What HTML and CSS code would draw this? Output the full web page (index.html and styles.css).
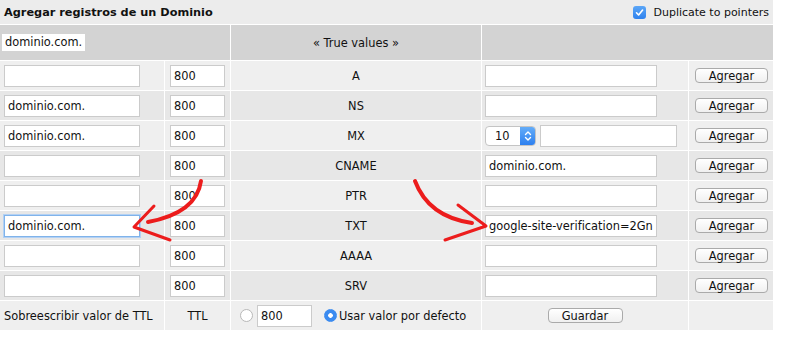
FILE: index.html
```html
<!DOCTYPE html>
<html lang="es">

<head>
    <meta charset="UTF-8">
    <title>Agregar registros de un Dominio</title>
    <link rel="stylesheet" href="styles.css">
</head>

<body>
    <div class="wrap">
        <table class="records">
            <colgroup>
                <col class="c-name">
                <col class="c-ttl">
                <col class="c-type">
                <col class="c-value">
                <col class="c-action">
            </colgroup>
            <tr class="row-title">
                <td colspan="5">
                    <div class="title-bar">
                        <span class="title">Agregar registros de un Dominio</span>
                        <label class="dup">
                            <span class="checkbox"><svg width="9" height="9" viewBox="0 0 9 9"><path d="M1.5 4.8 L3.6 7 L7.6 2" fill="none" stroke="#fff" stroke-width="1.6" stroke-linecap="round" stroke-linejoin="round"/></svg></span>
                            Duplicate to pointers
                        </label>
                    </div>
                </td>
            </tr>
            <tr class="row-head">
                <td colspan="2"><span class="domain-tag">dominio.com.</span></td>
                <td class="center">« True values »</td>
                <td colspan="2"></td>
            </tr>
            <tr class="odd">
                <td class="c1"><input class="txt name" type="text"></td>
                <td class="c2"><input class="txt ttl" type="text" value="800"></td>
                <td class="center">A</td>
                <td class="c4"><input class="txt value" type="text"></td>
                <td class="c5"><button class="btn">Agregar</button></td>
            </tr>
            <tr class="even">
                <td class="c1"><input class="txt name" type="text" value="dominio.com."></td>
                <td class="c2"><input class="txt ttl" type="text" value="800"></td>
                <td class="center">NS</td>
                <td class="c4"><input class="txt value" type="text"></td>
                <td class="c5"><button class="btn">Agregar</button></td>
            </tr>
            <tr class="odd">
                <td class="c1"><input class="txt name" type="text" value="dominio.com."></td>
                <td class="c2"><input class="txt ttl" type="text" value="800"></td>
                <td class="center">MX</td>
                <td class="c4">
                    <div class="mx">
                        <div class="select">
                            <span class="select-val">10</span>
                            <span class="select-arrows"><svg width="8" height="12" viewBox="0 0 8 12"><path d="M1.5 4.5 L4 2 L6.5 4.5 M1.5 7.5 L4 10 L6.5 7.5" fill="none" stroke="#fff" stroke-width="1.4" stroke-linecap="round" stroke-linejoin="round"/></svg></span>
                        </div>
                        <input class="txt prio" type="text">
                    </div>
                </td>
                <td class="c5"><button class="btn">Agregar</button></td>
            </tr>
            <tr class="even">
                <td class="c1"><input class="txt name" type="text"></td>
                <td class="c2"><input class="txt ttl" type="text" value="800"></td>
                <td class="center">CNAME</td>
                <td class="c4"><input class="txt value" type="text" value="dominio.com."></td>
                <td class="c5"><button class="btn">Agregar</button></td>
            </tr>
            <tr class="odd">
                <td class="c1"><input class="txt name" type="text"></td>
                <td class="c2"><input class="txt ttl" type="text" value="800"></td>
                <td class="center">PTR</td>
                <td class="c4"><input class="txt value" type="text"></td>
                <td class="c5"><button class="btn">Agregar</button></td>
            </tr>
            <tr class="even">
                <td class="c1"><input class="txt name focus" type="text" value="dominio.com."></td>
                <td class="c2"><input class="txt ttl" type="text" value="800"></td>
                <td class="center">TXT</td>
                <td class="c4"><input class="txt value" type="text" value="google-site-verification=2Gn"></td>
                <td class="c5"><button class="btn">Agregar</button></td>
            </tr>
            <tr class="odd">
                <td class="c1"><input class="txt name" type="text"></td>
                <td class="c2"><input class="txt ttl" type="text" value="800"></td>
                <td class="center">AAAA</td>
                <td class="c4"><input class="txt value" type="text"></td>
                <td class="c5"><button class="btn">Agregar</button></td>
            </tr>
            <tr class="even">
                <td class="c1"><input class="txt name" type="text"></td>
                <td class="c2"><input class="txt ttl" type="text" value="800"></td>
                <td class="center">SRV</td>
                <td class="c4"><input class="txt value" type="text"></td>
                <td class="c5"><button class="btn">Agregar</button></td>
            </tr>
            <tr class="odd">
                <td class="c1 label">Sobreescribir valor de TTL</td>
                <td class="center">TTL</td>
                <td class="c3">
                    <div class="ttl-opts">
                        <input class="radio" type="radio" name="ttl">
                        <input class="txt ttl" type="text" value="800">
                        <label class="use-default"><input class="radio" type="radio" name="ttl" checked>Usar valor por defecto</label>
                    </div>
                </td>
                <td class="center"><button class="btn save">Guardar</button></td>
                <td></td>
            </tr>
        </table>

        <!-- hand drawn arrows -->
        <svg class="arrows" width="787" height="340" viewBox="0 0 787 340">
            <g fill="none" stroke="#ec1c1c" stroke-linecap="round" stroke-linejoin="round">
                <path d="M201 181 C198 202 180 216 148 222" stroke-width="4"/>
                <path d="M154 206 L134 227 L170 240" stroke-width="3"/>
                <path d="M415 181 C424 205 444 219 472 223" stroke-width="4"/>
                <path d="M458 205 L486 226 L445 240" stroke-width="3"/>
            </g>
        </svg>
    </div>
</body>

</html>
```

FILE: styles.css
```css
/* General */
body {
    margin: 0;
    padding: 0;
    background-color: #fff;
    font-family: 'DejaVu Sans', Verdana, sans-serif;
    font-size: 11.4px;
    color: #111;
}

.wrap {
    position: relative;
    width: 787px;
    height: 340px;
}

/* Table */
.records {
    border-collapse: separate;
    border-spacing: 0;
    table-layout: fixed;
    width: 774px;
}

.c-name { width: 165px; }
.c-ttl { width: 66px; }
.c-type { width: 251px; }
.c-value { width: 207px; }
.c-action { width: 85px; }

.records td {
    border-right: 1px solid #fff;
    border-bottom: 1px solid #fff;
    padding: 0;
    vertical-align: middle;
    white-space: nowrap;
}

.records tr { height: 30px; }
.records .odd td { background-color: #efefef; }
.records .even td { background-color: #e7e7e7; }

.records .center { text-align: center; }
.records .c1 { padding-left: 4px; }
.records .c2 { padding-left: 5px; }
.records .c3 { padding-left: 9px; }
.records .c4 { padding-left: 3px; }
.records .c5 { padding-left: 6px; }

/* Title bar */
.row-title { height: 25px !important; }

.row-title td {
    background-color: #ececec;
}

.title-bar {
    display: flex;
    justify-content: space-between;
    align-items: center;
    padding: 0 4px;
}

.title {
    font-weight: bold;
    font-size: 11.3px;
}

.dup {
    display: flex;
    align-items: center;
    gap: 7px;
    font-size: 11px;
}

.checkbox {
    width: 13px;
    height: 13px;
    border-radius: 3px;
    background: linear-gradient(#5ba6f7, #2f82ee);
    display: flex;
    align-items: center;
    justify-content: center;
}

/* True values row */
.row-head { height: 36px !important; }

.row-head td {
    background-color: #d3d3d3;
}

.domain-tag {
    display: inline-block;
    margin-left: 2px;
    padding: 1px 3px;
    background-color: #fff;
    line-height: 15px;
}

/* Inputs */
.txt {
    box-sizing: border-box;
    height: 22px;
    border: 1px solid #cbcbcb;
    background-color: #fff;
    padding: 0 3px;
    font-family: 'DejaVu Sans', Verdana, sans-serif;
    font-size: 11.4px;
    color: #111;
    vertical-align: middle;
    outline: none;
}

.txt.name { width: 136px; }
.txt.ttl { width: 55px; }
.txt.value { width: 172px; }
.txt.prio { width: 137px; }

.txt.focus {
    border-color: #80b3ea;
    box-shadow: 0 0 0 1px #b3d1f4;
}

/* MX select */
.mx {
    display: flex;
    align-items: center;
    gap: 4px;
}

.select {
    box-sizing: border-box;
    width: 51px;
    height: 20px;
    border: 1px solid #c4c4c4;
    border-radius: 4px;
    background-color: #fff;
    display: flex;
    justify-content: space-between;
    overflow: hidden;
}

.select-val {
    padding-left: 9px;
    line-height: 18px;
}

.select-arrows {
    width: 15px;
    background: linear-gradient(#64acf8, #2c7fef);
    display: flex;
    align-items: center;
    justify-content: center;
}

/* Buttons */
.btn {
    box-sizing: border-box;
    width: 73px;
    height: 15px;
    padding: 0;
    border: 1px solid #aaa;
    border-radius: 4px;
    background: linear-gradient(#fff, #f0f0f0);
    font-family: 'DejaVu Sans', Verdana, sans-serif;
    font-size: 11.4px;
    line-height: 12px;
    color: #111;
    vertical-align: middle;
}

.btn.save { width: 75px; }

/* TTL row */
.ttl-opts {
    display: flex;
    align-items: center;
}

.radio {
    appearance: none;
    -webkit-appearance: none;
    box-sizing: border-box;
    width: 13px;
    height: 13px;
    margin: 0 4px 0 0;
    border: 1px solid #b8b8b8;
    border-radius: 50%;
    background-color: #fff;
}

.radio:checked {
    border-color: #3b8bf0;
    background: radial-gradient(circle, #fff 0 2px, #3b8bf0 2.6px);
}

.use-default {
    display: flex;
    align-items: center;
    margin-left: 12px;
}

.use-default .radio { margin-right: 2px; }

/* Arrows overlay */
.arrows {
    position: absolute;
    left: 0;
    top: 0;
    pointer-events: none;
}
```
